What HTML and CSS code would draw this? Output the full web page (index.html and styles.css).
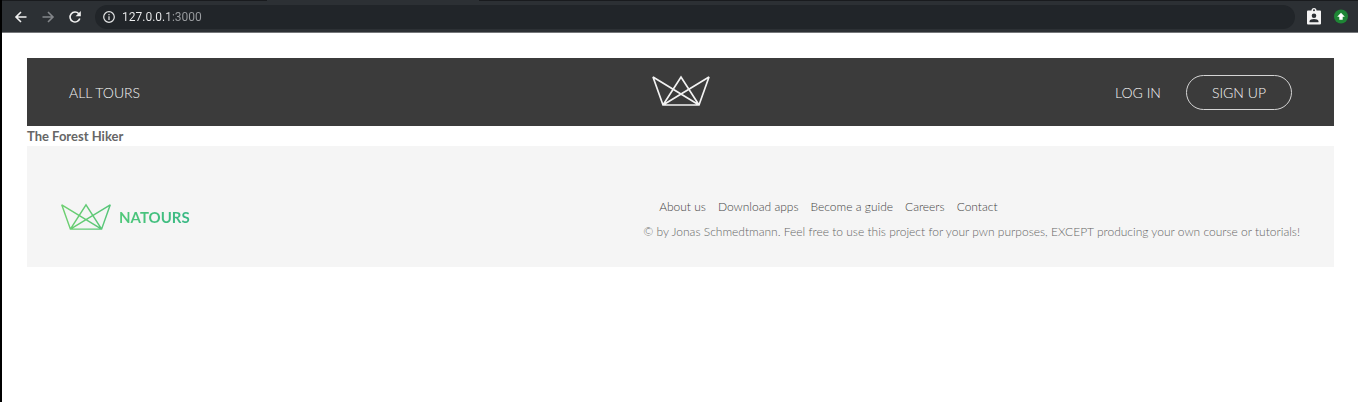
FILE: index.html
```html
<!DOCTYPE html>
<html lang="en">
<head>
<meta charset="utf-8">
<meta name="viewport" content="width=device-width, initial-scale=1">
<title>Natours | The Forest Hiker</title>
<link rel="stylesheet" href="styles.css">
</head>
<body>
<svg class="defs" aria-hidden="true">
  <symbol id="crown" viewBox="0 0 60 32">
    <path d="M2 2 12 30H48L58 2 12 30 30 2 48 30Z" fill="none" stroke-linejoin="miter" stroke-miterlimit="2"/>
  </symbol>
</svg>
<div class="browser">
  <div class="tabs"><span class="tabs__active"></span></div>
  <div class="toolbar">
    <button class="tool" aria-label="Back"><svg viewBox="0 0 14 14"><path d="M12.500 7H2M7 2 2 7l5 5"/></svg></button>
    <button class="tool tool--off" aria-label="Forward"><svg viewBox="0 0 14 14"><path d="M1.500 7H12M7 2l5 5-5 5"/></svg></button>
    <button class="tool" aria-label="Reload"><svg viewBox="0 0 14 14"><path d="M11.800 8.500A5 5 0 1 1 10.800 3.700"/><path class="solid" d="M12.800 1v5.200H7.600Z"/></svg></button>
    <label class="address">
      <svg class="address__info" viewBox="0 0 14 14" aria-hidden="true"><circle cx="7" cy="7" r="5.300"/><path d="M7 6.300V10M7 3.900v1.300"/></svg>
      <input class="address__input" type="text" value="127.0.0.1:3000" aria-label="Address">
    </label>
    <button class="extension" aria-label="Profile badge"><svg viewBox="0 0 16 18"><path fill="#f4f4f4" fill-rule="evenodd" d="M2 2.500h3.500a2.500 2.500 0 0 1 5 0H14q1 0 1 1v12q0 1-1 1H2q-1 0-1-1v-12q0-1 1-1Zm6-1.200a1 1 0 1 0 0 2 1 1 0 0 0 0-2Zm0 4.200a2.300 2.300 0 1 0 0 4.600 2.300 2.300 0 0 0 0-4.600Zm-4.500 8.700h9v-1c0-1.500-2.500-2.300-4.500-2.300s-4.500.8-4.500 2.300Z"/></svg></button>
    <button class="extension" aria-label="Update"><svg viewBox="0 0 16 18"><circle cx="8" cy="8.500" r="7" fill="#1e8535"/><path fill="#fff" d="m8 4.700 3.800 4H9.700v3H6.300v-3H4.200Z"/></svg></button>
  </div>
</div>
<div class="page">
  <header class="header">
    <nav class="nav"><a class="nav__link" href="#">All tours</a></nav>
    <a class="header__logo" href="#" aria-label="Natours home"><svg class="crown crown--white"><use href="#crown"/></svg></a>
    <nav class="nav nav--user">
      <button class="nav__link">Log in</button>
      <button class="nav__link nav__link--cta">Sign up</button>
    </nav>
  </header>
  <h1 class="tour">The Forest Hiker</h1>
  <footer class="footer">
    <a class="brand" href="#">
      <svg class="crown crown--green"><defs><linearGradient id="green" gradientUnits="userSpaceOnUse" x1="0" x2="60" y1="0" y2="0"><stop stop-color="#6fd070"/><stop offset="1" stop-color="#55c57a"/></linearGradient></defs><use href="#crown"/></svg>
      <span class="brand__name">NATOURS</span>
    </a>
    <div class="footer__info">
      <ul class="footer__nav">
        <li><a href="#">About us</a></li>
        <li><a href="#">Download apps</a></li>
        <li><a href="#">Become a guide</a></li>
        <li><a href="#">Careers</a></li>
        <li><a href="#">Contact</a></li>
      </ul>
      <p class="footer__copyright">© by Jonas Schmedtmann. Feel free to use this project for your pwn purposes, EXCEPT producing your own course or tutorials!</p>
    </div>
  </footer>
</div>
</body>
</html>
```
FILE: styles.css
```css
*, *::before, *::after { box-sizing: border-box; margin: 0; padding: 0; }
body {
  min-height: 100vh;
  border-left: 2px solid #000;
  background: #fff;
  color: #666;
  font-family: Lato, "Liberation Sans", sans-serif;
  font-weight: 300;
}
button, input { border: 0; background: none; color: inherit; font: inherit; }
a { color: inherit; text-decoration: none; }
.defs { position: absolute; width: 0; height: 0; }

.browser { background: #2c3034; border-bottom: 1px solid #75777a; }
.tabs { height: 1px; padding-left: 265px; background: #191b1e; }
.tabs__active { display: block; width: 212px; height: 1px; background: #2c3034; }
.toolbar { display: flex; align-items: center; height: 31px; padding: 0 9px 0 12px; }
.tool { width: 14px; height: 14px; margin-right: 13px; color: #f1f1f1; }
.tool--off { color: #83868a; }
.tool svg, .address__info { display: block; width: 14px; height: 14px; fill: none; stroke: currentColor; stroke-width: 1.6; }
.tool .solid { fill: currentColor; stroke: none; }
.address {
  display: flex;
  flex: 1;
  align-items: center;
  gap: 6px;
  height: 24px;
  margin-right: 11px;
  padding-left: 7px;
  border-radius: 12px;
  background: #212529;
  color: #e4e5e6;
}
.address__info { stroke-width: 1.2; }
.address__input {
  flex: 1;
  height: 20px;
  background: linear-gradient(90deg, #eeeff0 47px, #9b9ea1 47px);
  -webkit-background-clip: text;
  background-clip: text;
  color: transparent;
  font: 400 12px/20px Roboto, "Liberation Sans", sans-serif;
}
.extension { width: 16px; height: 18px; }
.extension + .extension { margin-left: 11px; }
.extension svg { display: block; width: 16px; height: 18px; }

.page { padding: 25px 24px 25px 25px; }
.header {
  display: grid;
  grid-template-columns: 1fr auto 1fr;
  align-items: center;
  height: 68px;
  padding: 0 42px;
  background: #3b3b3b;
  color: #f7f7f7;
}
.header__logo { padding-bottom: 2px; }
.nav { display: flex; align-items: center; }
.nav--user { justify-content: flex-end; gap: 25px; }
.nav__link { padding-top: 2px; font-size: 14px; line-height: 20px; text-transform: uppercase; }
.nav__link--cta { height: 35px; padding: 2px 25px 0; border: 1px solid #d5d5d5; border-radius: 18px; }
.crown { display: block; }
.crown--white { width: 60px; height: 32px; stroke: #f2f2f2; stroke-width: 1.7; }
.crown--green { width: 52px; height: 28px; stroke: url(#green); stroke-width: 1.7; }

.tour { font-size: 13px; font-weight: 700; line-height: 20px; }

.footer {
  display: flex;
  align-items: center;
  justify-content: space-between;
  padding: 50px 34px 24px 33px;
  background: #f5f5f5;
}
.brand { display: flex; align-items: center; gap: 7px; padding-bottom: 6px; }
.brand__name {
  background: linear-gradient(90deg, #50c878, #38b885);
  -webkit-background-clip: text;
  background-clip: text;
  color: transparent;
  font-size: 15px;
  font-weight: 700;
  line-height: 20px;
}
.footer__nav { display: flex; gap: 12px; padding-left: 16px; color: #444; list-style: none; font-size: 12px; line-height: 22px; }
.footer__copyright { margin-top: 3px; color: #666; font-size: 12px; line-height: 22px; }
```
